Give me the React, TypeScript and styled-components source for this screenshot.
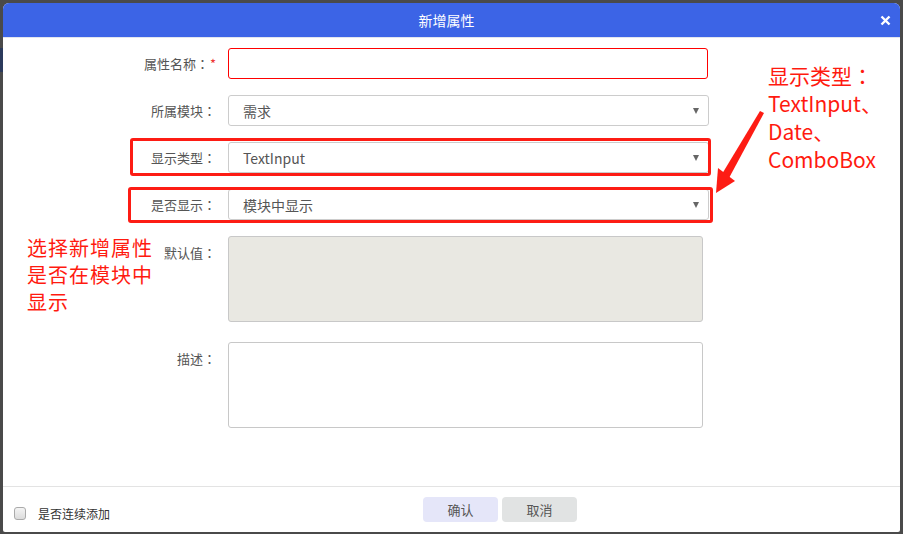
import React from "react";
import styled, { createGlobalStyle, css } from "styled-components";

const GlobalStyle = createGlobalStyle`
  html, body {
    margin: 0;
    padding: 0;
  }
  body {
    background: #4a4a4a;
    font-family: "Noto Sans CJK SC", "Noto Sans", sans-serif;
  }
`;

const Page = styled.div`
  position: relative;
  width: 903px;
  height: 534px;
  box-sizing: border-box;
  padding: 3px 3px 2px 3px;
  background-color: #4a4a4a;
  background-image: linear-gradient(
    to bottom,
    transparent 48px,
    #2b3a5c 48px,
    #2b3a5c 72px,
    transparent 72px
  );
  background-size: 3px 100%;
  background-repeat: no-repeat;
  overflow: hidden;
`;

const Dialog = styled.div`
  width: 897px;
  height: 529px;
  background: #fff;
  border-radius: 6px 6px 2px 2px;
  display: flex;
  flex-direction: column;
  overflow: hidden;
`;

const Header = styled.div`
  height: 34px;
  flex: none;
  background: #3c64e6;
  border-bottom: 1px solid #e1e5ef;
  display: flex;
  align-items: center;
  justify-content: center;
  position: relative;
  padding-right: 10px;
  color: #fff;
  font-size: 14px;
`;

const Close = styled.span`
  position: absolute;
  right: 9px;
  top: 12px;
  width: 11px;
  height: 11px;
  display: block;

  svg {
    display: block;
  }
`;

const Body = styled.div`
  flex: 1;
  display: flex;
  flex-direction: column;
  gap: 16px;
  padding-top: 10px;
`;

const Row = styled.div<{ $top?: number; $gap?: number }>`
  display: flex;
  align-items: ${(p) => (p.$top !== undefined ? "flex-start" : "center")};
  margin-top: ${(p) => p.$gap ?? 0}px;
  ${(p) =>
    p.$top !== undefined &&
    css`
      & > label {
        padding-top: ${p.$top}px;
      }
    `}
`;

const Label = styled.label`
  width: 213px;
  flex: none;
  margin-right: 12px;
  text-align: right;
  font-size: 13px;
  color: #555;
  line-height: 18px;
`;

const Colon = styled.span`
  font-family: "Noto Sans CJK JP", "Noto Sans CJK SC", sans-serif;
`;

const Star = styled.span`
  color: #e33;
  margin-left: 1px;
`;

const TextInput = styled.div<{ $error?: boolean }>`
  width: 480px;
  height: 31px;
  box-sizing: border-box;
  border: 1px solid ${(p) => (p.$error ? "#f00" : "#ccc")};
  border-radius: 3px;
  background: #fff;
`;

const SelectBox = styled.div`
  width: 481px;
  height: 31px;
  box-sizing: border-box;
  border: 1px solid #ccc;
  border-radius: 3px;
  background: #fff;
  display: flex;
  align-items: center;
  padding: 0 9px 0 14px;
  font-size: 14px;
  color: #555;

  &::after {
    content: "";
    margin-left: auto;
    border-left: 3.5px solid transparent;
    border-right: 3.5px solid transparent;
    border-top: 6px solid #666;
  }
`;

const TextArea = styled.div<{ $disabled?: boolean }>`
  width: 475px;
  height: 86px;
  box-sizing: border-box;
  border: 1px solid #c8c8c8;
  border-radius: 3px;
  background: ${(p) => (p.$disabled ? "#e9e8e2" : "#fff")};
`;

const Footer = styled.div`
  height: 45px;
  flex: none;
  border-top: 1px solid #e3e3e3;
  display: flex;
  align-items: center;
  padding-left: 11px;
`;

const CheckGroup = styled.div`
  width: 409px;
  display: flex;
  align-items: center;
  margin-top: 7px;
  font-size: 12px;
  color: #333;
`;

const CheckBox = styled.span`
  width: 10px;
  height: 11px;
  border: 1px solid #aaa;
  border-radius: 3px;
  background: linear-gradient(#f4f4f4, #dcdcdc);
  margin-right: 12px;
`;

const Buttons = styled.div`
  display: flex;
  gap: 4px;
`;

const Button = styled.button<{ $primary?: boolean }>`
  width: 75px;
  height: 25px;
  border: none;
  border-radius: 4px;
  background: ${(p) => (p.$primary ? "#e5e6f9" : "#e1e3e3")};
  color: #555;
  font-family: inherit;
  font-size: 13px;
  padding: 0;
`;

const RedFrame = styled.div<{ $x: number; $y: number; $w: number; $h: number }>`
  position: absolute;
  left: ${(p) => p.$x}px;
  top: ${(p) => p.$y}px;
  width: ${(p) => p.$w}px;
  height: ${(p) => p.$h}px;
  box-sizing: border-box;
  border: 3px solid #fd1c14;
  border-radius: 3px;
  pointer-events: none;
`;

const Note = styled.div<{ $x: number; $y: number; $lh: number; $size: number; $ls?: number }>`
  position: absolute;
  left: ${(p) => p.$x}px;
  top: ${(p) => p.$y}px;
  font-size: ${(p) => p.$size}px;
  line-height: ${(p) => p.$lh}px;
  letter-spacing: ${(p) => p.$ls ?? 0}px;
  color: #ff1a0f;
  white-space: nowrap;
`;

const ArrowSvg = styled.svg`
  position: absolute;
  left: 0;
  top: 0;
  pointer-events: none;
`;

const C = () => <Colon>：</Colon>;

export default function App() {
  return (
    <>
      <GlobalStyle />
      <Page>
        <Dialog>
          <Header>
            新增属性
            <Close>
              <svg width="11" height="11" viewBox="0 0 11 11">
                <path d="M1.5 1.5 L9.5 9.5 M9.5 1.5 L1.5 9.5" stroke="#fff" strokeWidth="2.4" />
              </svg>
            </Close>
          </Header>
          <Body>
            <Row>
              <Label>
                属性名称<C />
                <Star>*</Star>
              </Label>
              <TextInput $error />
            </Row>
            <Row>
              <Label>
                所属模块<C />
              </Label>
              <SelectBox>需求</SelectBox>
            </Row>
            <Row>
              <Label>
                显示类型<C />
              </Label>
              <SelectBox>TextInput</SelectBox>
            </Row>
            <Row>
              <Label>
                是否显示<C />
              </Label>
              <SelectBox>模块中显示</SelectBox>
            </Row>
            <Row $top={8}>
              <Label>
                默认值<C />
              </Label>
              <TextArea $disabled />
            </Row>
            <Row $top={8} $gap={4}>
              <Label>
                描述<C />
              </Label>
              <TextArea />
            </Row>
          </Body>
          <Footer>
            <CheckGroup>
              <CheckBox />
              是否连续添加
            </CheckGroup>
            <Buttons>
              <Button $primary>确认</Button>
              <Button>取消</Button>
            </Buttons>
          </Footer>
        </Dialog>

        <RedFrame $x={130} $y={138} $w={581} $h={38} />
        <RedFrame $x={128} $y={187} $w={585} $h={36} />
        <ArrowSvg width="903" height="534">
          <polygon points="760,111 764,113 729,178 722,174" fill="#fd1c14" />
          <polygon points="716,193 718,168 735,181" fill="#fd1c14" />
        </ArrowSvg>
        <Note $x={768} $y={61} $lh={28} $size={21}>
          显示类型<Colon>：</Colon>
          <br />
          TextInput、
          <br />
          Date、
          <br />
          ComboBox
        </Note>
        <Note $x={27} $y={234} $lh={27} $size={20} $ls={1}>
          选择新增属性
          <br />
          是否在模块中
          <br />
          显示
        </Note>
      </Page>
    </>
  );
}
